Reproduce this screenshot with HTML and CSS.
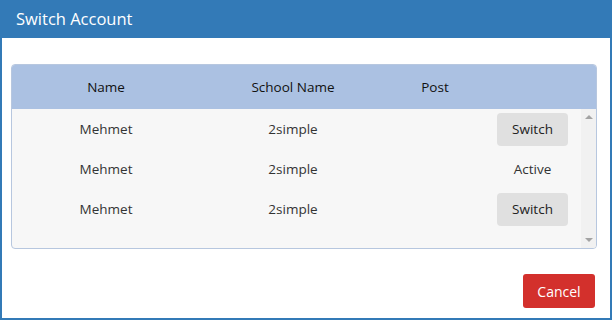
FILE: index.html
```html
<!DOCTYPE html>
<html lang="en">
<head>
    <meta charset="UTF-8">
    <meta name="viewport" content="width=device-width, initial-scale=1.0">
    <title>Switch Account</title>
    <link rel="stylesheet" href="styles.css">
</head>
<body>
<div class="modal">
    <div class="modal_header">Switch Account</div>
    <div class="modal_body">
        <div class="grid_panel">
            <table class="grid_head">
                <colgroup><col class="c1"><col class="c2"><col class="c3"><col></colgroup>
                <tr><th>Name</th><th>School Name</th><th>Post</th><th></th></tr>
            </table>
            <div class="grid_rows">
                <table class="grid_body">
                    <colgroup><col class="c1"><col class="c2"><col class="c3"><col></colgroup>
                    <tr><td>Mehmet</td><td>2simple</td><td></td><td><button type="button" class="switch_btn">Switch</button></td></tr>
                    <tr><td>Mehmet</td><td>2simple</td><td></td><td>Active</td></tr>
                    <tr><td>Mehmet</td><td>2simple</td><td></td><td><button type="button" class="switch_btn">Switch</button></td></tr>
                </table>
                <div class="scroll_bar">
                    <span class="arrow_up"></span>
                    <span class="arrow_down"></span>
                </div>
            </div>
        </div>
    </div>
    <div class="modal_footer">
        <button type="button" class="cancel_btn">Cancel</button>
    </div>
</div>
</body>
</html>
```

FILE: styles.css
```css
body{
    margin: 0px;
    font-family: "Open Sans", "Noto Sans", Arial, sans-serif;
    font-size: 13.5px;
    color: #333;
}
.modal{
    width: 612px;
    height: 320px;
    box-sizing: border-box;
    border: 2px solid #337ab7;
    border-top: 0;
    background: white;
    display: flex;
    flex-direction: column;
}
.modal_header{
    background: #337ab7;
    color: white;
    height: 38px;
    line-height: 37px;
    font-size: 16.5px;
    margin: 0 -2px;
    padding-left: 16px;
}
.modal_body{
    padding: 26px 13px 0 9px;
}
.grid_panel{
    border: 1px solid #b7c7df;
    border-radius: 4px;
    overflow: hidden;
    background: #f7f7f7;
}
table{
    border-collapse: collapse;
    table-layout: fixed;
}
.c1{ width: 188px; }
.c2{ width: 186px; }
.c3{ width: 98px; }
.grid_head{
    width: 100%;
    background: #abc1e2;
}
.grid_head th{
    height: 44px;
    font-weight: normal;
    color: #111;
    text-align: center;
    padding: 0;
}
.grid_rows{
    height: 139px;
    display: flex;
}
.grid_body{
    flex: 1;
    align-self: flex-start;
}
.grid_body td{
    height: 40px;
    text-align: center;
    padding: 0;
}
.scroll_bar{
    width: 15px;
    background: #f1f1f1;
    display: flex;
    flex-direction: column;
    justify-content: space-between;
    align-items: center;
    padding: 6px 0;
}
.arrow_up{
    border: 4px solid transparent;
    border-top: 0;
    border-bottom: 4px solid #a3a3a3;
}
.arrow_down{
    border: 4px solid transparent;
    border-bottom: 0;
    border-top: 4px solid #a3a3a3;
}
.switch_btn{
    font-family: inherit;
    font-size: 13.5px;
    color: #222;
    background: #e0e0e0;
    border: 0;
    border-radius: 4px;
    width: 71px;
    height: 33px;
    padding: 0;
}
.modal_footer{
    display: flex;
    justify-content: flex-end;
    padding: 25px 15px 0 0;
}
.cancel_btn{
    font-family: inherit;
    font-size: 14px;
    color: white;
    background: #d3302c;
    border: 0;
    border-radius: 3px;
    width: 72px;
    height: 34px;
    padding: 0;
}
```
